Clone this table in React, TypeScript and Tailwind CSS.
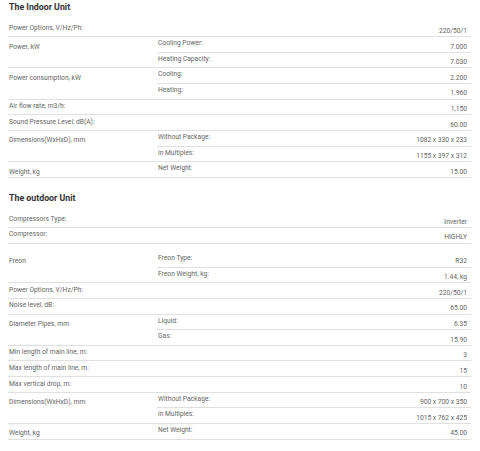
import React from "react";

type Group = { label: string; rows: [string, string][]; tall?: boolean };

const indoor: Group[] = [
  { label: "Power Options, V/Hz/Ph:", rows: [["", "220/50/1"]] },
  { label: "Power, kW", rows: [["Cooling Power:", "7.000"], ["Heating Capacity:", "7.030"]] },
  { label: "Power consumption, kW", rows: [["Cooling:", "2.200"], ["Heating:", "1.960"]] },
  { label: "Air flow rate, m3/h:", rows: [["", "1,150"]] },
  { label: "Sound Pressure Level, dB(A):", rows: [["", "60.00"]] },
  { label: "Dimensions(WxHxD), mm", rows: [["Without Package:", "1082 x 330 x 233"], ["in Multiples:", "1155 x 397 x 312"]] },
  { label: "Weight, kg", rows: [["Net Weight:", "15.00"]] },
];

const outdoor: Group[] = [
  { label: "Compressors Type:", rows: [["", "Inverter"]] },
  { label: "Compressor:", rows: [["", "HIGHLY"]] },
  { label: "Freon", rows: [["Freon Type:", "R32"], ["Freon Weight, kg:", "1.44, kg"]], tall: true },
  { label: "Power Options, V/Hz/Ph:", rows: [["", "220/50/1"]] },
  { label: "Noise level, dB:", rows: [["", "65.00"]] },
  { label: "Diameter Pipes, mm", rows: [["Liquid:", "6.35"], ["Gas:", "15.90"]] },
  { label: "Min length of main line, m:", rows: [["", "3"]] },
  { label: "Max length of main line, m:", rows: [["", "15"]] },
  { label: "Max vertical drop, m:", rows: [["", "10"]] },
  { label: "Dimensions(WxHxD), mm", rows: [["Without Package:", "900 x 700 x 350"], ["in Multiples:", "1015 x 762 x 425"]] },
  { label: "Weight, kg", rows: [["Net Weight:", "45.00"]] },
];

function SpecTable({ groups }: { groups: Group[] }) {
  return (
    <div className="flex flex-col">
      {groups.map((g, gi) => {
        const hasSub = g.rows.some((r) => r[0] !== "");
        return (
          <div key={gi} className="flex border-b border-[#e0e0e0]">
            <div
              className={
                "w-[149px] shrink-0 pl-[1px] " +
                (g.tall ? "pt-[13.5px]" : hasSub ? "pt-[5.5px]" : "pt-[2.5px]")
              }
            >
              {g.label}
            </div>
            <div className="flex flex-1 flex-col">
              {g.rows.map((r, ri) => (
                <div
                  key={ri}
                  className={
                    "flex justify-between pl-[1px] pr-[4px] " +
                    (ri < g.rows.length - 1 ? "border-b border-[#e0e0e0] " : "") +
                    (g.tall && ri === 0 ? "h-[24px]" : ri === g.rows.length - 1 ? "h-[14.65px]" : "h-[15.65px]")
                  }
                >
                  <span className={g.tall && ri === 0 ? "pt-[10px]" : "pt-[2px]"}>{r[0]}</span>
                  <span className={g.tall && ri === 0 ? "pt-[13.5px]" : "pt-[5.5px]"}>{r[1]}</span>
                </div>
              ))}
            </div>
          </div>
        );
      })}
    </div>
  );
}

export default function App() {
  return (
    <div className="w-[480px] h-[451px] bg-white pl-[8px] pr-[9px] font-['Roboto',sans-serif] text-[6.7px] leading-[8px] text-[#666]">
      <h2 className="pt-[2px] pl-[1px] h-[21.4px] text-[8.8px] leading-[11px] font-bold text-[#333]">The Indoor Unit</h2>
      <SpecTable groups={indoor} />
      <h2 className="pt-[15.6px] pl-[1px] h-[34.5px] text-[8.8px] leading-[11px] font-bold text-[#333]">The outdoor Unit</h2>
      <SpecTable groups={outdoor} />
    </div>
  );
}
